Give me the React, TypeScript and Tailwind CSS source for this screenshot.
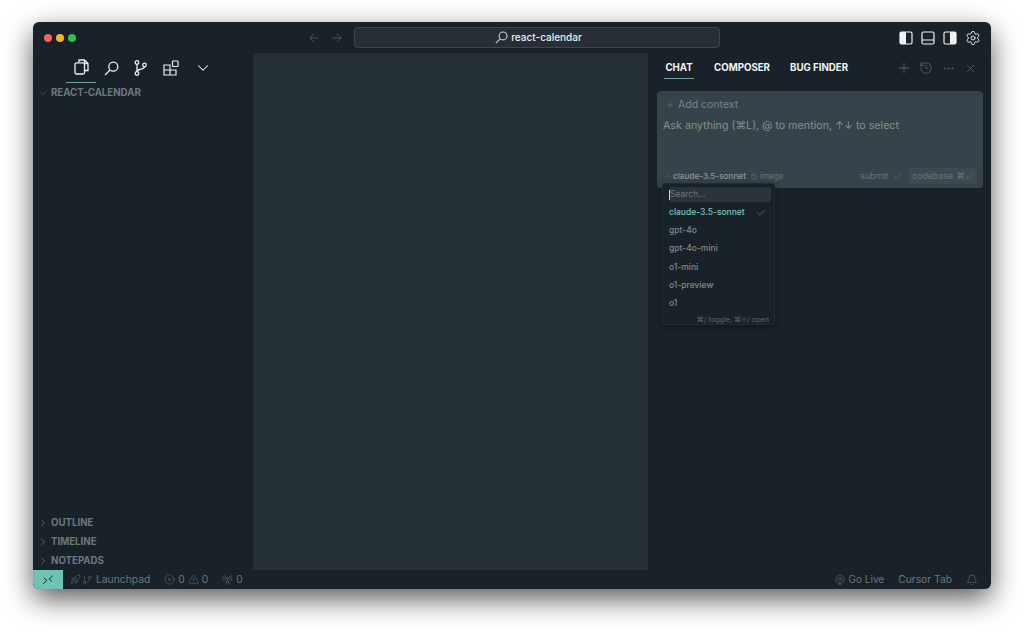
import {
  ArrowLeft,
  ArrowRight,
  Bell,
  ChevronDown,
  ChevronRight,
  ChevronUp,
  Check,
  CircleX,
  CornerDownLeft,
  Ellipsis,
  History,
  Image,
  Plus,
  Podcast,
  RadioTower,
  Rocket,
  GitBranch,
  Settings,
  TriangleAlert,
  X,
} from "lucide-react";

const models = ["gpt-4o", "gpt-4o-mini", "o1-mini", "o1-preview", "o1"];
const sections = ["OUTLINE", "TIMELINE", "NOTEPADS"];

function LayoutIcon({ fill }: { fill: "left" | "bottom" | "right" }) {
  return (
    <svg width="14" height="14" viewBox="0 0 14 14" fill="none">
      {fill === "left" && <rect x="1" y="1" width="6" height="12" fill="#f0f3f4" />}
      {fill === "right" && <rect x="7" y="1" width="6" height="12" fill="#f0f3f4" />}
      <rect x="1" y="1" width="12" height="12" rx="1.5" stroke="#f0f3f4" strokeWidth="1.2" />
      {fill === "bottom" && <path d="M1 9h12" stroke="#f0f3f4" strokeWidth="1.2" />}
    </svg>
  );
}

function FilesIcon() {
  return (
    <svg width="15" height="16" viewBox="0 0 15 16" fill="none" stroke="#eef1f2" strokeWidth="1.3">
      <path d="M5 3.500V1h5.500L14 4.500V11.500H10.500" />
      <path d="M10.500 1v3.500H14" />
      <rect x="1" y="3.800" width="9.500" height="11.200" rx="1.500" />
    </svg>
  );
}

function LensIcon({ size, color }: { size: number; color: string }) {
  return (
    <svg width={size} height={size} viewBox="0 0 15 15" fill="none" stroke={color} strokeWidth="1.3">
      <circle cx="9.300" cy="5.700" r="4.500" />
      <path d="M6 9L1 14" />
    </svg>
  );
}

function BranchIcon() {
  return (
    <svg width="13" height="16" viewBox="0 0 13 16" fill="none" stroke="#eef1f2" strokeWidth="1.3">
      <circle cx="3" cy="2.500" r="1.800" />
      <circle cx="3" cy="13.500" r="1.800" />
      <circle cx="10.500" cy="5" r="1.800" />
      <path d="M3 4.300v7.400M10.500 6.800c0 3-7.500 1.700-7.500 4.900" />
    </svg>
  );
}

function ExtensionsIcon() {
  return (
    <svg width="16" height="16" viewBox="0 0 16 16" fill="none" stroke="#e8ecee" strokeWidth="1.2">
      <path d="M1 5h6v10H1zM1 10h12v5H7M7 5v5" />
      <rect x="9.500" y="1" width="5.500" height="5.500" rx="0.500" />
    </svg>
  );
}

function RemoteIcon() {
  return (
    <svg width="12" height="12" viewBox="0 0 12 12" fill="none" stroke="#1b3a3a" strokeWidth="1">
      <path d="M1 10l4-3.500L2 4M11 1.500L7 5l3 2.500" />
    </svg>
  );
}

export default function App() {
  return (
    <div className="h-[633px] w-[1024px] overflow-hidden bg-white pl-[33px] pt-[22px] font-['Inter',sans-serif]">
      <div className="flex h-[567px] w-[958px] flex-col overflow-hidden rounded-[6px] bg-[#1a2229] shadow-[0_10px_28px_rgba(0,0,0,0.65)]">
        {/* Title bar */}
        <div className="flex h-[31px] shrink-0 items-center">
          <div className="flex w-[270px] items-center gap-[4px] pl-[11px]">
            <span className="h-[8px] w-[8px] rounded-full bg-[#f0625a]" />
            <span className="h-[8px] w-[8px] rounded-full bg-[#f5b32e]" />
            <span className="h-[8px] w-[8px] rounded-full bg-[#33c04a]" />
          </div>
          <div className="flex w-[51px] items-center gap-[9px] pl-[4px] text-[#56626a]">
            <ArrowLeft size={14} strokeWidth={1.3} />
            <ArrowRight size={14} strokeWidth={1.3} />
          </div>
          <div className="flex h-[21px] w-[366px] items-center justify-center gap-[3px] rounded-[4px] border border-[#3c474d] bg-[#252f35] pl-[3px] text-[10px] font-medium text-[#eef1f2]">
            <LensIcon size={13} color="#c9d0d3" />
            <span>react-calendar</span>
          </div>
          <div className="ml-auto flex items-center gap-[8px] pr-[10px]">
            <LayoutIcon fill="left" />
            <LayoutIcon fill="bottom" />
            <LayoutIcon fill="right" />
            <Settings size={16} strokeWidth={1.4} className="text-[#eef1f2]" />
          </div>
        </div>

        {/* Main */}
        <div className="flex min-h-0 flex-1">
          {/* Explorer */}
          <aside className="flex w-[220px] shrink-0 flex-col">
            <div className="flex h-[30px] items-center pl-[33px]">
              <div className="flex h-[30px] w-[30px] items-center justify-center border-b border-[#71a3a0] pb-[1px]">
                <FilesIcon />
              </div>
              <span className="ml-[8px]">
                <LensIcon size={15} color="#eef1f2" />
              </span>
              <span className="ml-[15px]">
                <BranchIcon />
              </span>
              <span className="ml-[16px]">
                <ExtensionsIcon />
              </span>
              <ChevronDown size={18} strokeWidth={1.4} className="ml-[15px] text-[#eef1f2]" />
            </div>
            <div className="mt-[4px] flex h-[12px] items-center gap-[2px] pl-[4px] text-[9.700px] font-bold text-[#6c787f]">
              <ChevronDown size={12} strokeWidth={1.3} className="text-[#566269]" />
              <span>REACT-CALENDAR</span>
            </div>
            <div className="mt-auto flex flex-col gap-[7px] pb-[3px] pl-[4px]">
              {sections.map((s) => (
                <div key={s} className="flex h-[12px] items-center gap-[2px] text-[9.700px] font-bold text-[#6c787f]">
                  <ChevronRight size={12} strokeWidth={1.3} className="text-[#7a868c]" />
                  <span>{s}</span>
                </div>
              ))}
            </div>
          </aside>

          {/* Editor */}
          <main className="w-[395px] shrink-0 bg-[#252f36]" />

          {/* Chat panel */}
          <section className="min-w-0 flex-1">
            <div className="flex h-[30px] items-center pl-[17px] pr-[14px] text-[9.700px] font-bold text-[#f2f4f5]">
              <span className="flex h-[30px] w-[28px] items-center justify-center pt-[2px]">
                <span className="border-b border-[#71a3a0] px-[1px] pb-[2px] pt-[2px]">CHAT</span>
              </span>
              <span className="ml-[21px]">COMPOSER</span>
              <span className="ml-[20px]">BUG FINDER</span>
              <div className="ml-auto flex items-center text-[#5d6a70]">
                <Plus size={16} strokeWidth={1.2} />
                <History size={14} strokeWidth={1.3} className="ml-[7px]" />
                <Ellipsis size={13} strokeWidth={1.3} className="ml-[9px]" />
                <X size={13} strokeWidth={1.3} className="ml-[9px]" />
              </div>
            </div>

            <div className="relative ml-[9px] mt-[8px] h-[97px] w-[326px] rounded-[4px] bg-[#36434a]">
              <div className="flex h-[27px] items-center gap-[3px] pl-[8px] text-[10.500px] text-[#77848a]">
                <Plus size={10} strokeWidth={1.2} />
                <span>Add context</span>
              </div>
              <div className="pl-[6px] pt-[1px] text-[10.700px] leading-[14px] text-[#84918f]">
                Ask anything (⌘L), @ to mention, ↑↓ to select
              </div>
              <div className="mt-[36px] flex h-[14px] items-center pl-[7px] text-[8.200px] text-[#66737a]">
                <ChevronUp size={8} strokeWidth={1.2} />
                <span className="ml-[1px] font-medium text-[#8b979c]">claude-3.5-sonnet</span>
                <Image size={7} strokeWidth={1.5} className="ml-[5px]" />
                <span className="ml-[2px]">image</span>
                <span className="ml-auto text-[8.800px]">submit</span>
                <CornerDownLeft size={9} strokeWidth={1.3} className="ml-[5px]" />
                <span className="ml-[7px] mr-[6px] flex items-center gap-[3px] rounded-[2px] bg-[#3d4a51] px-[3px] py-[1px] text-[8.800px]">
                  codebase
                  <span className="flex items-center">
                    ⌘
                    <CornerDownLeft size={9} strokeWidth={1.3} />
                  </span>
                </span>
              </div>

              {/* Model dropdown */}
              <div className="absolute left-[5px] top-[92px] h-[142px] w-[113px] rounded-[3px] border border-[#232c32] bg-[#1a2229] pl-[6px] pr-[3px] pt-[3px] text-[8.500px] font-medium text-[#7f8a8f] shadow-[0_2px_6px_rgba(0,0,0,0.35)]">
                <div className="flex h-[15px] items-center rounded-[2px] bg-[#2a343b] font-normal text-[#6d787e]">
                  <span className="h-[10px] w-px bg-[#cfd6d8]" />
                  <span>Search...</span>
                </div>
                <div className="flex h-[18px] items-center pt-[3px] pr-[5px] text-[#74c5b8]">
                  <span>claude-3.5-sonnet</span>
                  <Check size={10} strokeWidth={1.3} className="ml-auto text-[#8d989c]" />
                </div>
                {models.map((m, i) => (
                  <div key={m} className={i === 0 ? "mt-[1px] flex h-[18.400px] items-center" : "flex h-[18.400px] items-center"}>
                    {m}
                  </div>
                ))}
                <div className="mt-[2px] pr-[2px] text-right text-[7.200px] font-normal text-[#5d686e]">⌘/ toggle, ⌘⟐/ open</div>
              </div>
            </div>
          </section>
        </div>

        {/* Status bar */}
        <footer className="flex h-[19px] shrink-0 items-center pr-[13px] text-[10.300px] text-[#6a767c]">
          <div className="flex h-[19px] w-[30px] items-center justify-center bg-[#70c2b4]">
            <RemoteIcon />
          </div>
          <Rocket size={11} strokeWidth={1.1} className="ml-[7px]" />
          <GitBranch size={10} strokeWidth={1.1} className="ml-[1px]" />
          <span className="ml-[4px]">Launchpad</span>
          <CircleX size={11} strokeWidth={1.1} className="ml-[14px]" />
          <span className="ml-[3px]">0</span>
          <TriangleAlert size={11} strokeWidth={1.1} className="ml-[3px]" />
          <span className="ml-[3px]">0</span>
          <RadioTower size={11} strokeWidth={1.1} className="ml-[14px]" />
          <span className="ml-[3px]">0</span>
          <div className="ml-auto flex items-center">
            <Podcast size={12} strokeWidth={1.1} />
            <span className="ml-[3px] text-[10px]">Go Live</span>
            <span className="ml-[14px]">Cursor Tab</span>
            <Bell size={12} strokeWidth={1.1} className="ml-[14px]" />
          </div>
        </footer>
      </div>
    </div>
  );
}
